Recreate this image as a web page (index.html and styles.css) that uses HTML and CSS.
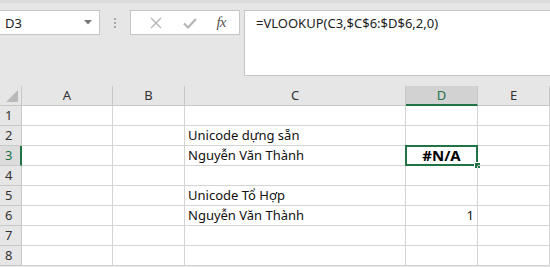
FILE: index.html
```html
<!DOCTYPE html>
<html lang="vi">
<head>
  <meta charset="UTF-8">
  <meta name="viewport" content="width=device-width, initial-scale=1.0">
  <title>VLOOKUP</title>
  <link rel="stylesheet" href="styles.css">
</head>
<body>
  <div class="toolbar">
    <div class="name-box">
      <span>D3</span>
      <svg class="caret" width="8" height="5" viewBox="0 0 8 5"><path d="M0 0h8L4 4.5z" fill="#777"/></svg>
    </div>
    <div class="grip">
      <span></span><span></span><span></span>
    </div>
    <div class="buttons">
      <svg width="14" height="14" viewBox="0 0 14 14"><path d="M2 2l10 10M12 2L2 12" stroke="#b4b4b4" stroke-width="1.3"/></svg>
      <svg width="16" height="14" viewBox="0 0 16 14"><path d="M2 7.5l4 4L14 3" stroke="#b4b4b4" stroke-width="2.2" fill="none"/></svg>
      <span class="fx">fx</span>
    </div>
    <div class="formula">=VLOOKUP(C3,$C$6:$D$6,2,0)</div>
  </div>

  <div class="sheet">
    <div class="hd corner"><svg width="12" height="12" viewBox="0 0 12 12"><path d="M12 0v12H0z" fill="#b9b9b9"/></svg></div>
    <div class="hd col">A</div>
    <div class="hd col">B</div>
    <div class="hd col">C</div>
    <div class="hd col active">D</div>
    <div class="hd col">E</div>

    <div class="hd row">1</div><div class="c"></div><div class="c"></div><div class="c"></div><div class="c"></div><div class="c"></div>
    <div class="hd row">2</div><div class="c"></div><div class="c"></div><div class="c">Unicode dựng sẵn</div><div class="c"></div><div class="c"></div>
    <div class="hd row current">3</div><div class="c"></div><div class="c"></div><div class="c">Nguyễn Văn Thành</div><div class="c selected">#N/A<i class="handle"></i></div><div class="c"></div>
    <div class="hd row">4</div><div class="c"></div><div class="c"></div><div class="c"></div><div class="c"></div><div class="c"></div>
    <div class="hd row">5</div><div class="c"></div><div class="c"></div><div class="c">Unicode Tổ Hợp</div><div class="c"></div><div class="c"></div>
    <div class="hd row">6</div><div class="c"></div><div class="c"></div><div class="c">Nguyễn Văn Thành</div><div class="c num">1</div><div class="c"></div>
    <div class="hd row">7</div><div class="c"></div><div class="c"></div><div class="c"></div><div class="c"></div><div class="c"></div>
    <div class="hd row">8</div><div class="c"></div><div class="c"></div><div class="c"></div><div class="c"></div><div class="c"></div>
  </div>
</body>
</html>
```

FILE: styles.css
```css
body {
  margin: 0;
  font-family: "Noto Sans", "Open Sans", sans-serif;
  background: #e6e6e6;
  overflow: hidden;
}

.toolbar {
  height: 86px;
  box-sizing: border-box;
  border-top: 3px solid #dcdcdc;
  padding-top: 7px;
  display: flex;
  align-items: flex-start;
}

.name-box {
  width: 100px;
  height: 25px;
  box-sizing: border-box;
  background: #fff;
  border: 1px solid #c6c6c6;
  border-left: none;
  display: flex;
  align-items: center;
  justify-content: space-between;
  padding: 0 7px 0 5px;
  font-size: 13px;
  color: #222;
}

.grip {
  width: 30px;
  height: 25px;
  display: flex;
  flex-direction: column;
  align-items: center;
  justify-content: center;
  gap: 2px;
}
.grip span {
  width: 2px;
  height: 2px;
  background: #a8a8a8;
}

.buttons {
  width: 110px;
  height: 25px;
  box-sizing: border-box;
  background: #fff;
  border: 1px solid #c6c6c6;
  display: flex;
  align-items: center;
  justify-content: space-around;
  padding: 0 4px 0 8px;
}
.fx {
  font-family: "Liberation Serif", serif;
  font-style: italic;
  font-size: 15px;
  color: #555;
  letter-spacing: -1px;
}

.formula {
  flex: 1;
  margin-left: 4px;
  height: 66px;
  box-sizing: border-box;
  background: #fff;
  border: 1px solid #c6c6c6;
  border-right: none;
  padding: 3px 11px;
  font-size: 13px;
  color: #222;
}

.sheet {
  display: grid;
  grid-template-columns: 22px 91px 72px 221px 72px 1fr;
  grid-auto-rows: 20px;
  background: #fff;
  font-size: 13px;
}

.hd {
  background: #e6e6e6;
  border-right: 1px solid #c8c8c8;
  border-bottom: 1px solid #c8c8c8;
  box-sizing: border-box;
  color: #333;
  line-height: 19px;
}
.corner {
  display: flex;
  align-items: flex-end;
  justify-content: flex-end;
  padding: 0 3px 3px 0;
}
.col {
  text-align: center;
}
.col.active {
  background: #d2d2d2;
  color: #217346;
  border-bottom: 2px solid #217346;
}
.row {
  padding-left: 5px;
}
.row.current {
  background: #dcdcdc;
  color: #217346;
  border-right: 2px solid #217346;
}

.c {
  border-right: 1px solid #d4d4d4;
  border-bottom: 1px solid #d4d4d4;
  box-sizing: border-box;
  padding: 0 3px;
  line-height: 19px;
  color: #111;
  white-space: nowrap;
  position: relative;
}
.c.num {
  text-align: right;
}
.c.selected {
  border: 2px solid #217346;
  margin: -1px 0 0 -1px;
  height: 21px;
  width: 73px;
  text-align: center;
  font-weight: bold;
  font-size: 15px;
  line-height: 17px;
  color: #000;
}
.handle {
  position: absolute;
  right: -5px;
  bottom: -5px;
  width: 5px;
  height: 5px;
  background: #217346;
  border: 1px solid #fff;
}
```
